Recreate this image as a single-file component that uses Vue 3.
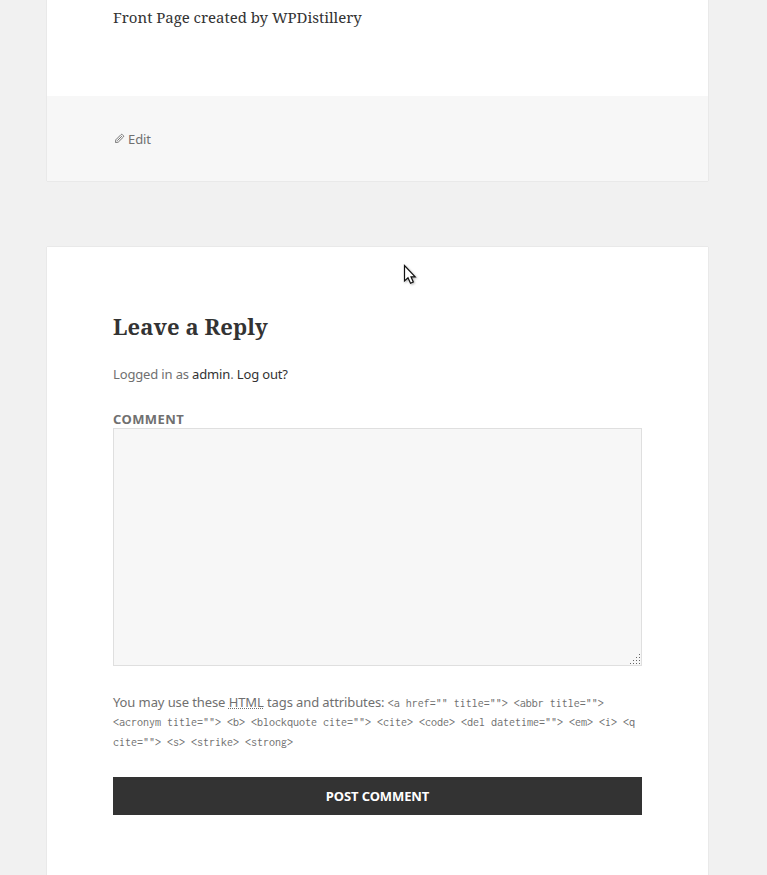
<script setup>
const grip = [[9, 0], [6, 3], [9, 3], [3, 6], [6, 6], [9, 6], [0, 9], [3, 9], [6, 9], [9, 9]]
</script>

<template>
  <main class="page">
    <article class="card entry">
      <div class="entry-content"><span class="entry-text">Front Page created by WPDistillery</span></div>
      <footer class="entry-footer">
        <a class="edit">
          <svg class="pencil" width="11" height="11" viewBox="0 0 11 11" fill="none" stroke="#777">
            <path d="M1.5 9.5 L1.8 6.8 L7 1.6 Q7.7 1 8.5 1.7 L9.3 2.5 Q10 3.2 9.4 4 L4.2 9.2 Z M3.3 7.7 L7.9 3.1" stroke-width="1" />
          </svg>
          <span>Edit</span>
        </a>
      </footer>
    </article>

    <section class="card comments">
      <h2><span class="title">Leave a Reply</span></h2>
      <p class="logged">Logged in as <a>admin</a>. <a>Log out?</a></p>
      <label for="comment">Comment</label>
      <div class="field">
        <textarea id="comment"></textarea>
        <svg class="grip" width="10" height="10" shape-rendering="crispEdges">
          <rect v-for="([x, y], i) in grip" :key="i" :x="x" :y="y" width="1" height="1" fill="#666" />
        </svg>
      </div>
      <p class="allowed">You may use these <abbr>HTML</abbr> tags and attributes: <code>&lt;a href="" title=""&gt; &lt;abbr title=""&gt; &lt;acronym title=""&gt; &lt;b&gt; &lt;blockquote cite=""&gt; &lt;cite&gt; &lt;code&gt; &lt;del datetime=""&gt; &lt;em&gt; &lt;i&gt; &lt;q cite=""&gt; &lt;s&gt; &lt;strike&gt; &lt;strong&gt;</code></p>
      <button type="button">Post Comment</button>
    </section>

    <svg class="cursor" width="16" height="24" viewBox="0 0 16 24">
      <path d="M1.5 1.5 V17 L5 13.8 L7.5 19.3 L10.3 18 L8 12.8 H12.2 Z" fill="#fff" stroke="#111" stroke-width="1.2" />
    </svg>
  </main>
</template>

<style>
body {
  background: #f1f1f1;
  overflow: hidden;
}
</style>

<style scoped>
.page {
  position: relative;
  box-sizing: border-box;
  height: 875px;
  padding: 0 59px 0 47px;
  overflow: hidden;
  display: flex;
  flex-direction: column;
  gap: 66px;
  background: #f1f1f1;
  font-family: "Noto Sans", sans-serif;
  font-size: 13px;
  line-height: 20px;
  color: #707070;
}
.card {
  background: #fff;
  box-shadow: 0 0 1px rgba(0, 0, 0, 0.2);
}
.entry {
  flex: 0 0 181px;
  display: flex;
  flex-direction: column;
}
.entry-content {
  box-sizing: border-box;
  height: 96px;
  padding: 5px 66px 0;
  color: #333;
  font-family: "Noto Serif", "DejaVu Serif", serif;
  font-size: 15px;
  line-height: 25px;
}
.entry-text {
  letter-spacing: -0.03px;
}
.entry-footer {
  flex: 1;
  box-sizing: border-box;
  padding: 33px 66px 0;
  background: #f7f7f7;
}
.edit {
  display: flex;
  align-items: center;
  letter-spacing: -0.1px;
}
.pencil {
  margin: 0 3px 1px 1px;
}
.comments {
  flex: 0 0 680px;
  box-sizing: border-box;
  padding: 65px 66px 0;
}
h2 {
  margin: 0;
  height: 52px;
  color: #333;
  font-family: "Noto Serif", "DejaVu Serif", serif;
  font-size: 22px;
  line-height: 28px;
  font-weight: 700;
  letter-spacing: 0.1px;
}
.logged {
  margin: 0 0 26px;
  letter-spacing: -0.15px;
}
.logged a {
  color: #333;
}
label {
  display: block;
  height: 18px;
  line-height: 19px;
  font-weight: 700;
  letter-spacing: 0.4px;
  text-transform: uppercase;
}
.field {
  position: relative;
  height: 238px;
}
textarea {
  display: block;
  box-sizing: border-box;
  width: 100%;
  height: 100%;
  border: 1px solid #dfdfdf;
  border-radius: 0;
  background: #f7f7f7;
  resize: none;
  outline: none;
}
.grip {
  position: absolute;
  right: 2px;
  bottom: 2px;
}
.allowed {
  height: 60.3px;
  margin: 26.7px 0 24px;
  line-height: 19.5px;
  letter-spacing: -0.1px;
}
abbr {
  text-decoration: underline dotted #707070 1px;
  text-underline-offset: 1px;
}
code {
  font-family: "Inconsolata", "Liberation Mono", monospace;
  font-size: 12px;
  line-height: 12px;
  letter-spacing: 0;
}
button {
  display: block;
  width: 100%;
  height: 38px;
  padding: 0;
  border: 0;
  background: #333;
  color: #fff;
  font: 700 13px/38px "Noto Sans", sans-serif;
  letter-spacing: -0.1px;
  text-transform: uppercase;
}
.cursor {
  position: absolute;
  left: 403px;
  top: 264px;
  filter: drop-shadow(1px 1px 1px rgba(0, 0, 0, 0.3));
}
</style>
